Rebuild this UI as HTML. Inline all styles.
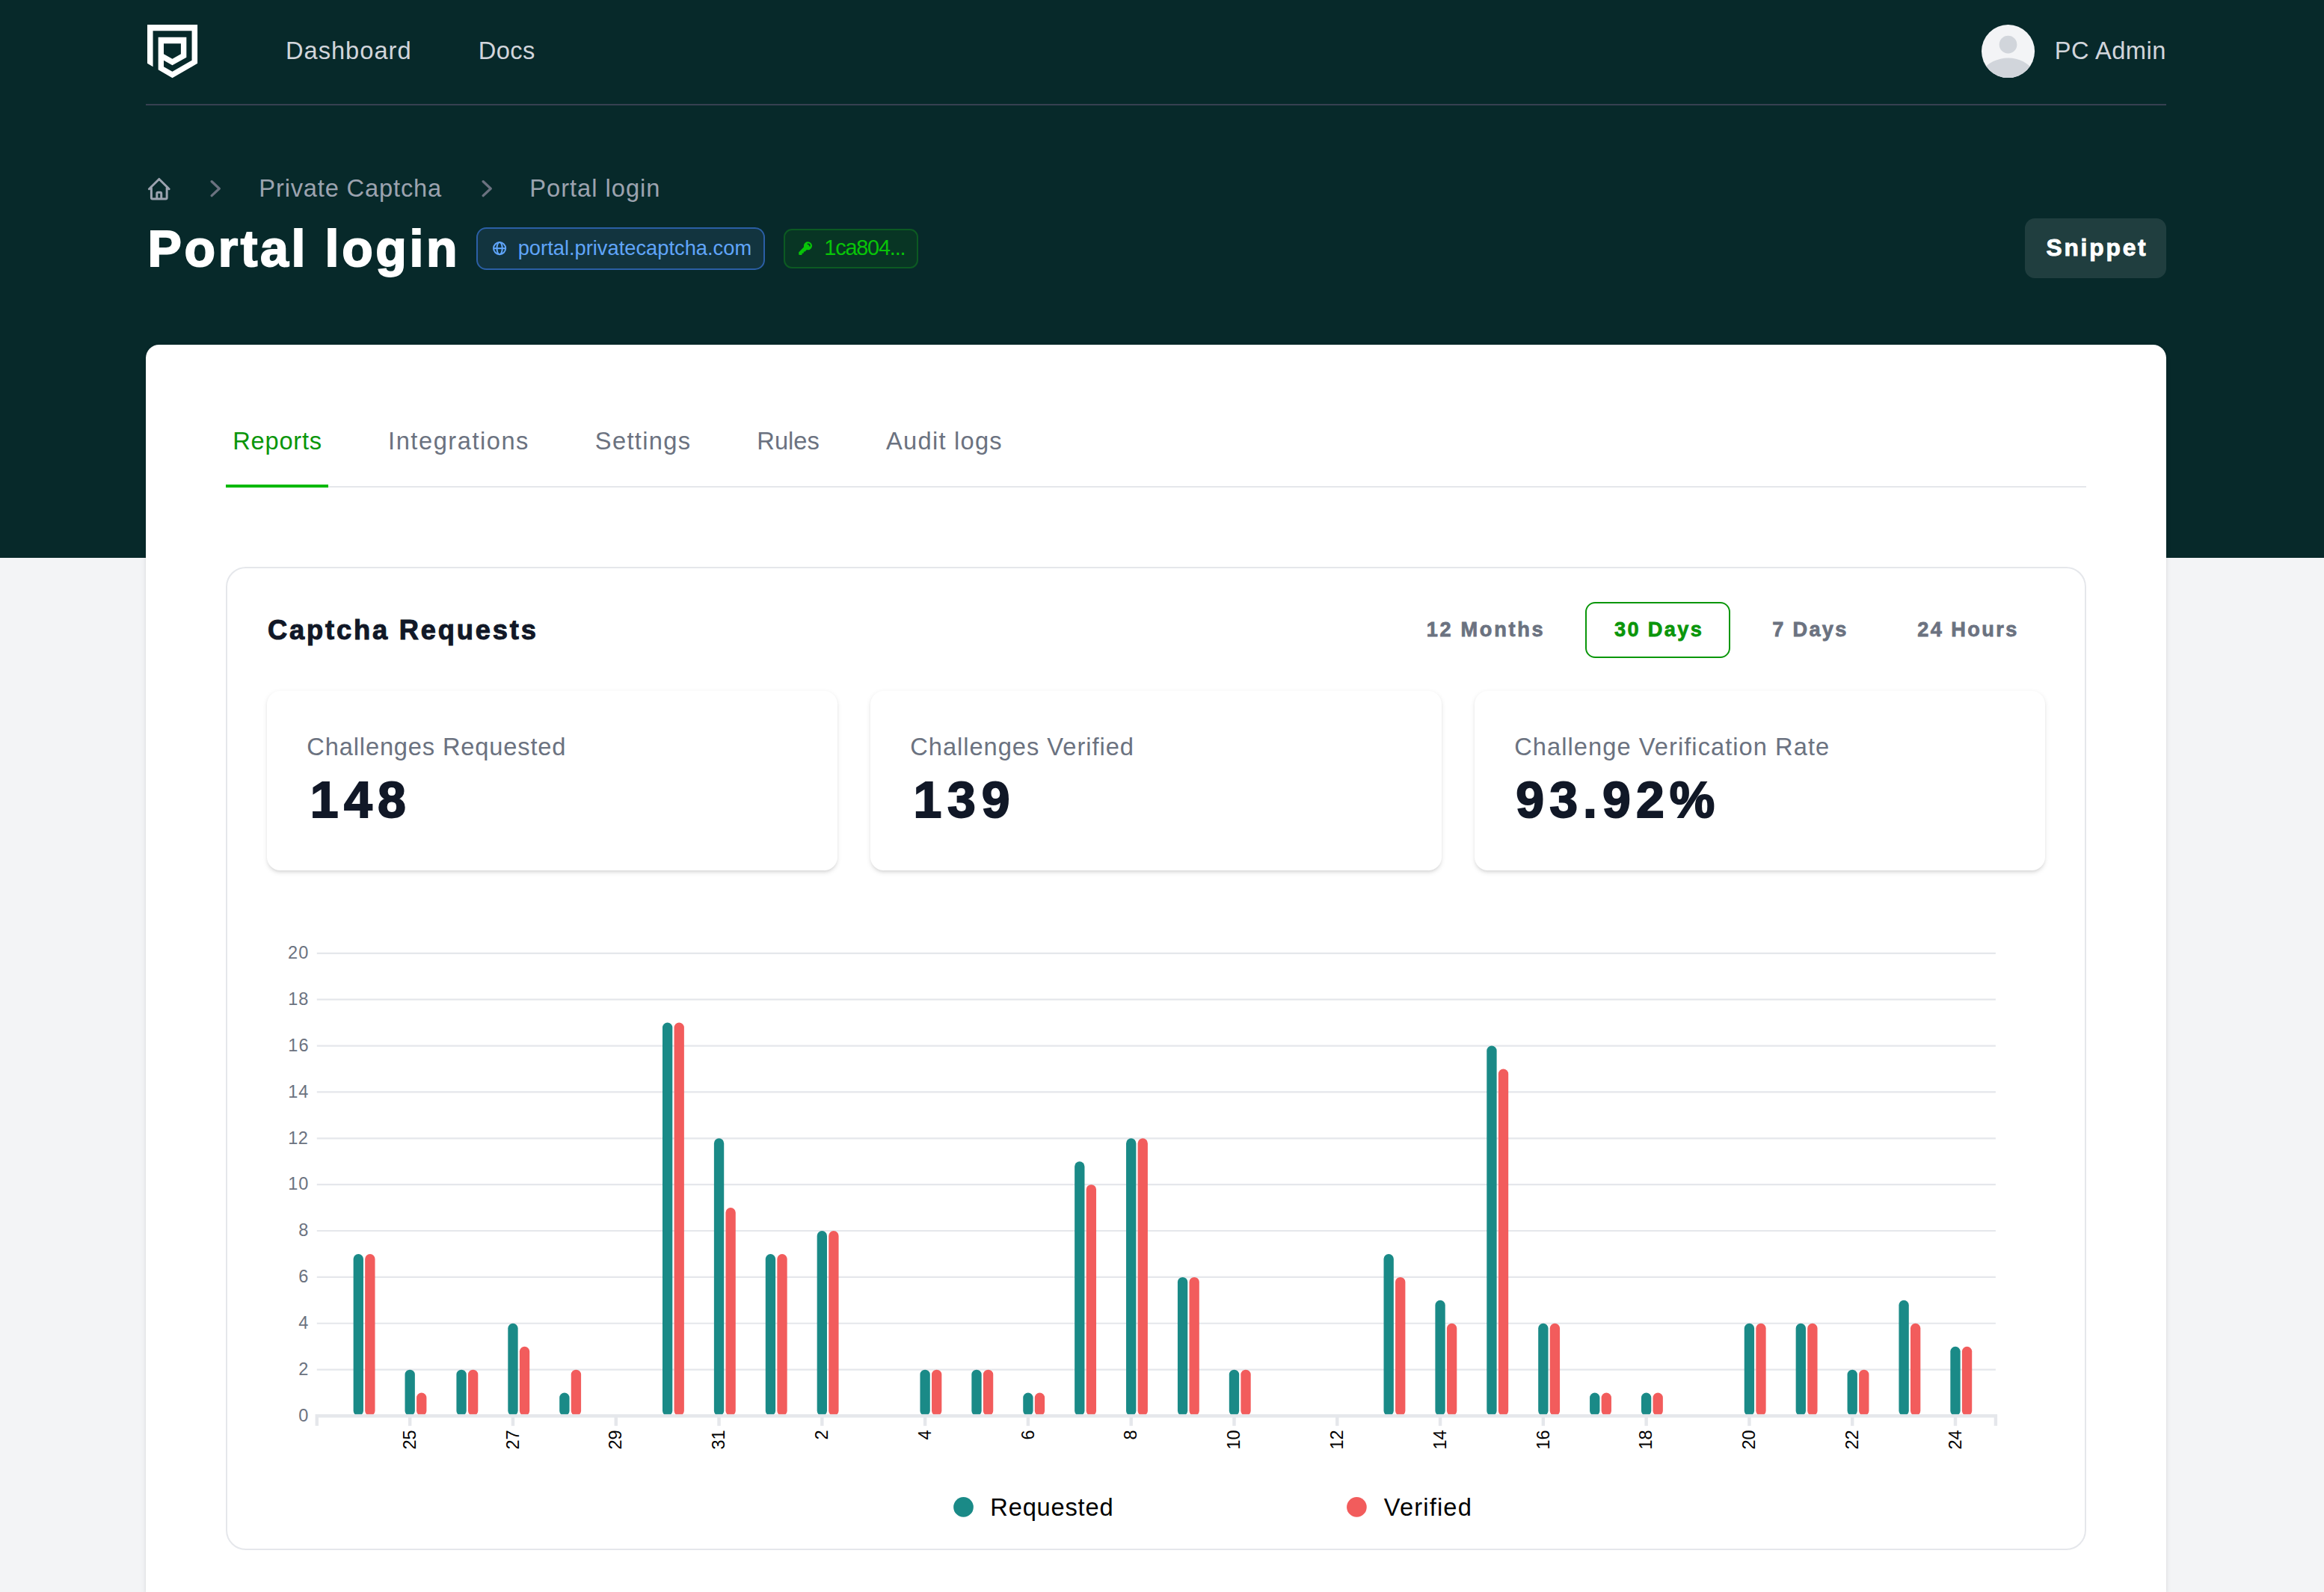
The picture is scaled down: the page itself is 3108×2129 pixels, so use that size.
<!DOCTYPE html>
<html lang="en"><head><meta charset="utf-8"><title>Portal login - Private Captcha</title>
<style>
html,body{margin:0;padding:0}
html{overflow:hidden;background:#f3f4f6}
body{width:3108px;height:2129px;overflow:hidden;background:#f3f4f6;position:relative;font-family:"Liberation Sans",sans-serif;-webkit-font-smoothing:antialiased}
.abs{position:absolute}
.t{position:absolute;white-space:nowrap;margin:0;padding:0}
svg{position:absolute;overflow:visible}
</style></head><body>

<div class="abs" style="left:0;top:0;width:3108px;height:745.7px;background:#07292a"></div>
<div class="abs" style="left:195px;top:138.6px;width:2702px;height:2.2px;background:#374151"></div>
<svg style="left:196.96px;top:32.88px" width="67.1" height="71.3" viewBox="270 205 1068 1135"><path fill="#fff" fill-rule="evenodd" d="M270,205 L1338,205 L1338,1030 L803,1340 L503,1165 L503,470 L1103,470 L1103,900 L803,1070 L620,965 L620,1100 L803,1205 L1218,965 L1218,335 L390,335 L390,1100 L270,1030 Z M620,605 L985,605 L985,830 L803,935 L620,830 Z"/></svg>
<svg style="left:2649.9px;top:33.1px" width="71.1" height="71.1" viewBox="0 0 24 24"><defs><clipPath id="av"><circle cx="12" cy="12" r="12"/></clipPath></defs><circle cx="12" cy="12" r="12" fill="#f3f4f6"/><g clip-path="url(#av)" fill="#d1d5db"><path d="M24 20.993V24H0v-2.996A14.977 14.977 0 0112.004 15c4.904 0 9.26 2.354 11.996 5.993z"/><circle cx="12" cy="9" r="4"/></g></svg>
<svg style="left:195px;top:234.5px" width="35.56" height="35.56" viewBox="0 0 24 24" fill="none" stroke="#9ca3af" stroke-width="2" stroke-linecap="round" stroke-linejoin="round"><path d="M3 12l2-2m0 0l7-7 7 7M5 10v10a1 1 0 001 1h3m10-11l2 2m-2-2v10a1 1 0 01-1 1h-3m-6 0a1 1 0 001-1v-4a1 1 0 011-1h2a1 1 0 011 1v4a1 1 0 001 1m-6 0h6"/></svg>
<svg style="left:266.1px;top:229.9px" width="44.44" height="44.44" viewBox="0 0 20 20"><path fill="#6b7280" fill-rule="evenodd" d="M7.21 14.77a.75.75 0 01.02-1.06L11.168 10 7.23 6.29a.75.75 0 111.04-1.08l4.5 4.25a.75.75 0 010 1.08l-4.5 4.25a.75.75 0 01-1.06-.02z" clip-rule="evenodd"/></svg>
<svg style="left:628.6px;top:229.9px" width="44.44" height="44.44" viewBox="0 0 20 20"><path fill="#6b7280" fill-rule="evenodd" d="M7.21 14.77a.75.75 0 01.02-1.06L11.168 10 7.23 6.29a.75.75 0 111.04-1.08l4.5 4.25a.75.75 0 010 1.08l-4.5 4.25a.75.75 0 01-1.06-.02z" clip-rule="evenodd"/></svg>
<div class="abs" style="left:637.1px;top:304.1px;width:385.8px;height:56.5px;box-sizing:border-box;border:2.2px solid #2b5fa5;background:#12343f;border-radius:13.3px"></div>
<svg style="left:656.9px;top:321px" width="22.22" height="22.22" viewBox="0 0 24 24" fill="none" stroke="#60a5fa" stroke-width="2.2"><circle cx="12" cy="12" r="8.7"/><ellipse cx="12" cy="12" rx="3.9" ry="8.7"/><path d="M3.3 12h17.4"/></svg>
<div class="abs" style="left:1048.1px;top:306.2px;width:180px;height:52.7px;box-sizing:border-box;border:2.2px solid #0c5a22;background:#083524;border-radius:11px"></div>
<svg style="left:1065.7px;top:320.9px" width="22.22" height="22.22" viewBox="0 0 20 20"><path fill="#08c408" fill-rule="evenodd" d="M8 7a5 5 0 1 1 3.61 4.804l-1.903 1.903A1 1 0 0 1 9 14H8v1a1 1 0 0 1-1 1H6v1a1 1 0 0 1-1 1H3a1 1 0 0 1-1-1v-2a1 1 0 0 1 .293-.707L8.196 8.39A5.002 5.002 0 0 1 8 7Zm5-3a.75.75 0 0 0 0 1.5A1.5 1.5 0 0 1 14.5 7 .75.75 0 0 0 16 7a3 3 0 0 0-3-3Z" clip-rule="evenodd"/></svg>
<div class="t" style="left:692.70px;top:317.99px;font-size:27.30px;line-height:27.30px;letter-spacing:-0.005px;color:#60a5fa">portal.privatecaptcha.com</div>
<div class="t" style="left:1102.30px;top:316.65px;font-size:28.89px;line-height:28.89px;letter-spacing:-1.197px;color:#08c408">1ca804...</div>
<div class="abs" style="left:2708px;top:291.8px;width:189px;height:80.2px;background:rgba(255,255,255,0.1);border-radius:13.3px"></div>
<div class="abs" style="left:194.8px;top:460.5px;width:2702.2px;height:1668.5px;background:#fff;border-radius:17.8px 17.8px 0 0;box-shadow:0 2.2px 6.7px rgba(0,0,0,0.1),0 2.2px 4.4px -2.2px rgba(0,0,0,0.1)"></div>
<div class="abs" style="left:302px;top:649.8px;width:2488px;height:2.2px;background:#e5e7eb"></div>
<div class="abs" style="left:302px;top:647.6px;width:137.1px;height:4.4px;background:#05b905"></div>
<div class="abs" style="left:301.7px;top:757.6px;width:2488.2px;height:1315.6px;box-sizing:border-box;border:2.2px solid #e5e7eb;border-radius:26.7px;background:#fff"></div>
<div class="abs" style="left:2119.9px;top:804.8px;width:194.1px;height:75.4px;box-sizing:border-box;border:2.2px solid #0a960a;border-radius:13.3px"></div>
<div class="abs" style="left:357.0px;top:923.7px;width:763.2px;height:240.2px;background:#fff;border-radius:17.8px;box-shadow:0 2.2px 6.7px rgba(0,0,0,0.1),0 2.2px 4.4px -2.2px rgba(0,0,0,0.1)"></div>
<div class="abs" style="left:1163.9px;top:923.7px;width:764.1px;height:240.2px;background:#fff;border-radius:17.8px;box-shadow:0 2.2px 6.7px rgba(0,0,0,0.1),0 2.2px 4.4px -2.2px rgba(0,0,0,0.1)"></div>
<div class="abs" style="left:1971.9px;top:923.7px;width:763.4px;height:240.2px;background:#fff;border-radius:17.8px;box-shadow:0 2.2px 6.7px rgba(0,0,0,0.1),0 2.2px 4.4px -2.2px rgba(0,0,0,0.1)"></div>
<svg style="left:0;top:0" width="3108" height="2129" viewBox="0 0 3108 2129"><line x1="423.8" x2="2668.9" y1="1831.63" y2="1831.63" stroke="#e5e7eb" stroke-width="2.2"/><line x1="423.8" x2="2668.9" y1="1769.76" y2="1769.76" stroke="#e5e7eb" stroke-width="2.2"/><line x1="423.8" x2="2668.9" y1="1707.89" y2="1707.89" stroke="#e5e7eb" stroke-width="2.2"/><line x1="423.8" x2="2668.9" y1="1646.02" y2="1646.02" stroke="#e5e7eb" stroke-width="2.2"/><line x1="423.8" x2="2668.9" y1="1584.15" y2="1584.15" stroke="#e5e7eb" stroke-width="2.2"/><line x1="423.8" x2="2668.9" y1="1522.28" y2="1522.28" stroke="#e5e7eb" stroke-width="2.2"/><line x1="423.8" x2="2668.9" y1="1460.41" y2="1460.41" stroke="#e5e7eb" stroke-width="2.2"/><line x1="423.8" x2="2668.9" y1="1398.54" y2="1398.54" stroke="#e5e7eb" stroke-width="2.2"/><line x1="423.8" x2="2668.9" y1="1336.67" y2="1336.67" stroke="#e5e7eb" stroke-width="2.2"/><line x1="423.8" x2="2668.9" y1="1274.80" y2="1274.80" stroke="#e5e7eb" stroke-width="2.2"/><rect x="472.63" y="1676.95" width="13.33" height="216.55" rx="6.67" fill="#1a8a87"/><rect x="488.19" y="1676.95" width="13.33" height="216.55" rx="6.67" fill="#f25c5c"/><rect x="541.53" y="1831.63" width="13.33" height="61.87" rx="6.67" fill="#1a8a87"/><rect x="557.08" y="1862.57" width="13.33" height="30.94" rx="6.67" fill="#f25c5c"/><rect x="610.42" y="1831.63" width="13.33" height="61.87" rx="6.67" fill="#1a8a87"/><rect x="625.98" y="1831.63" width="13.33" height="61.87" rx="6.67" fill="#f25c5c"/><rect x="679.31" y="1769.76" width="13.33" height="123.74" rx="6.67" fill="#1a8a87"/><rect x="694.87" y="1800.69" width="13.33" height="92.81" rx="6.67" fill="#f25c5c"/><rect x="748.21" y="1862.57" width="13.33" height="30.94" rx="6.67" fill="#1a8a87"/><rect x="763.76" y="1831.63" width="13.33" height="61.87" rx="6.67" fill="#f25c5c"/><rect x="885.99" y="1367.61" width="13.33" height="525.89" rx="6.67" fill="#1a8a87"/><rect x="901.55" y="1367.61" width="13.33" height="525.89" rx="6.67" fill="#f25c5c"/><rect x="954.89" y="1522.28" width="13.33" height="371.22" rx="6.67" fill="#1a8a87"/><rect x="970.44" y="1615.09" width="13.33" height="278.42" rx="6.67" fill="#f25c5c"/><rect x="1023.78" y="1676.95" width="13.33" height="216.55" rx="6.67" fill="#1a8a87"/><rect x="1039.34" y="1676.95" width="13.33" height="216.55" rx="6.67" fill="#f25c5c"/><rect x="1092.68" y="1646.02" width="13.33" height="247.48" rx="6.67" fill="#1a8a87"/><rect x="1108.23" y="1646.02" width="13.33" height="247.48" rx="6.67" fill="#f25c5c"/><rect x="1230.46" y="1831.63" width="13.33" height="61.87" rx="6.67" fill="#1a8a87"/><rect x="1246.02" y="1831.63" width="13.33" height="61.87" rx="6.67" fill="#f25c5c"/><rect x="1299.36" y="1831.63" width="13.33" height="61.87" rx="6.67" fill="#1a8a87"/><rect x="1314.91" y="1831.63" width="13.33" height="61.87" rx="6.67" fill="#f25c5c"/><rect x="1368.25" y="1862.57" width="13.33" height="30.94" rx="6.67" fill="#1a8a87"/><rect x="1383.81" y="1862.57" width="13.33" height="30.94" rx="6.67" fill="#f25c5c"/><rect x="1437.14" y="1553.21" width="13.33" height="340.29" rx="6.67" fill="#1a8a87"/><rect x="1452.70" y="1584.15" width="13.33" height="309.35" rx="6.67" fill="#f25c5c"/><rect x="1506.04" y="1522.28" width="13.33" height="371.22" rx="6.67" fill="#1a8a87"/><rect x="1521.59" y="1522.28" width="13.33" height="371.22" rx="6.67" fill="#f25c5c"/><rect x="1574.93" y="1707.89" width="13.33" height="185.61" rx="6.67" fill="#1a8a87"/><rect x="1590.49" y="1707.89" width="13.33" height="185.61" rx="6.67" fill="#f25c5c"/><rect x="1643.82" y="1831.63" width="13.33" height="61.87" rx="6.67" fill="#1a8a87"/><rect x="1659.38" y="1831.63" width="13.33" height="61.87" rx="6.67" fill="#f25c5c"/><rect x="1850.50" y="1676.95" width="13.33" height="216.55" rx="6.67" fill="#1a8a87"/><rect x="1866.06" y="1707.89" width="13.33" height="185.61" rx="6.67" fill="#f25c5c"/><rect x="1919.40" y="1738.83" width="13.33" height="154.68" rx="6.67" fill="#1a8a87"/><rect x="1934.95" y="1769.76" width="13.33" height="123.74" rx="6.67" fill="#f25c5c"/><rect x="1988.29" y="1398.54" width="13.33" height="494.96" rx="6.67" fill="#1a8a87"/><rect x="2003.85" y="1429.47" width="13.33" height="464.03" rx="6.67" fill="#f25c5c"/><rect x="2057.18" y="1769.76" width="13.33" height="123.74" rx="6.67" fill="#1a8a87"/><rect x="2072.74" y="1769.76" width="13.33" height="123.74" rx="6.67" fill="#f25c5c"/><rect x="2126.08" y="1862.57" width="13.33" height="30.94" rx="6.67" fill="#1a8a87"/><rect x="2141.63" y="1862.57" width="13.33" height="30.94" rx="6.67" fill="#f25c5c"/><rect x="2194.97" y="1862.57" width="13.33" height="30.94" rx="6.67" fill="#1a8a87"/><rect x="2210.53" y="1862.57" width="13.33" height="30.94" rx="6.67" fill="#f25c5c"/><rect x="2332.76" y="1769.76" width="13.33" height="123.74" rx="6.67" fill="#1a8a87"/><rect x="2348.31" y="1769.76" width="13.33" height="123.74" rx="6.67" fill="#f25c5c"/><rect x="2401.65" y="1769.76" width="13.33" height="123.74" rx="6.67" fill="#1a8a87"/><rect x="2417.21" y="1769.76" width="13.33" height="123.74" rx="6.67" fill="#f25c5c"/><rect x="2470.55" y="1831.63" width="13.33" height="61.87" rx="6.67" fill="#1a8a87"/><rect x="2486.10" y="1831.63" width="13.33" height="61.87" rx="6.67" fill="#f25c5c"/><rect x="2539.44" y="1738.83" width="13.33" height="154.68" rx="6.67" fill="#1a8a87"/><rect x="2555.00" y="1769.76" width="13.33" height="123.74" rx="6.67" fill="#f25c5c"/><rect x="2608.33" y="1800.69" width="13.33" height="92.81" rx="6.67" fill="#1a8a87"/><rect x="2623.89" y="1800.69" width="13.33" height="92.81" rx="6.67" fill="#f25c5c"/><path d="M423.8,1906.80V1893.5H2668.9V1906.80" fill="none" stroke="#e5e7eb" stroke-width="4.44"/><line x1="548.19" x2="548.19" y1="1893.5" y2="1906.80" stroke="#e5e7eb" stroke-width="4.44"/><line x1="685.98" x2="685.98" y1="1893.5" y2="1906.80" stroke="#e5e7eb" stroke-width="4.44"/><line x1="823.77" x2="823.77" y1="1893.5" y2="1906.80" stroke="#e5e7eb" stroke-width="4.44"/><line x1="961.55" x2="961.55" y1="1893.5" y2="1906.80" stroke="#e5e7eb" stroke-width="4.44"/><line x1="1099.34" x2="1099.34" y1="1893.5" y2="1906.80" stroke="#e5e7eb" stroke-width="4.44"/><line x1="1237.13" x2="1237.13" y1="1893.5" y2="1906.80" stroke="#e5e7eb" stroke-width="4.44"/><line x1="1374.92" x2="1374.92" y1="1893.5" y2="1906.80" stroke="#e5e7eb" stroke-width="4.44"/><line x1="1512.70" x2="1512.70" y1="1893.5" y2="1906.80" stroke="#e5e7eb" stroke-width="4.44"/><line x1="1650.49" x2="1650.49" y1="1893.5" y2="1906.80" stroke="#e5e7eb" stroke-width="4.44"/><line x1="1788.28" x2="1788.28" y1="1893.5" y2="1906.80" stroke="#e5e7eb" stroke-width="4.44"/><line x1="1926.06" x2="1926.06" y1="1893.5" y2="1906.80" stroke="#e5e7eb" stroke-width="4.44"/><line x1="2063.85" x2="2063.85" y1="1893.5" y2="1906.80" stroke="#e5e7eb" stroke-width="4.44"/><line x1="2201.64" x2="2201.64" y1="1893.5" y2="1906.80" stroke="#e5e7eb" stroke-width="4.44"/><line x1="2339.43" x2="2339.43" y1="1893.5" y2="1906.80" stroke="#e5e7eb" stroke-width="4.44"/><line x1="2477.21" x2="2477.21" y1="1893.5" y2="1906.80" stroke="#e5e7eb" stroke-width="4.44"/><line x1="2615.00" x2="2615.00" y1="1893.5" y2="1906.80" stroke="#e5e7eb" stroke-width="4.44"/><text transform="translate(555.89,1912.40) rotate(-90)" text-anchor="end" font-family='"Liberation Sans", sans-serif' font-size="23.56" fill="#000">25</text><text transform="translate(693.68,1912.40) rotate(-90)" text-anchor="end" font-family='"Liberation Sans", sans-serif' font-size="23.56" fill="#000">27</text><text transform="translate(831.47,1912.40) rotate(-90)" text-anchor="end" font-family='"Liberation Sans", sans-serif' font-size="23.56" fill="#000">29</text><text transform="translate(969.25,1912.40) rotate(-90)" text-anchor="end" font-family='"Liberation Sans", sans-serif' font-size="23.56" fill="#000">31</text><text transform="translate(1107.04,1912.40) rotate(-90)" text-anchor="end" font-family='"Liberation Sans", sans-serif' font-size="23.56" fill="#000">2</text><text transform="translate(1244.83,1912.40) rotate(-90)" text-anchor="end" font-family='"Liberation Sans", sans-serif' font-size="23.56" fill="#000">4</text><text transform="translate(1382.62,1912.40) rotate(-90)" text-anchor="end" font-family='"Liberation Sans", sans-serif' font-size="23.56" fill="#000">6</text><text transform="translate(1520.40,1912.40) rotate(-90)" text-anchor="end" font-family='"Liberation Sans", sans-serif' font-size="23.56" fill="#000">8</text><text transform="translate(1658.19,1912.40) rotate(-90)" text-anchor="end" font-family='"Liberation Sans", sans-serif' font-size="23.56" fill="#000">10</text><text transform="translate(1795.98,1912.40) rotate(-90)" text-anchor="end" font-family='"Liberation Sans", sans-serif' font-size="23.56" fill="#000">12</text><text transform="translate(1933.76,1912.40) rotate(-90)" text-anchor="end" font-family='"Liberation Sans", sans-serif' font-size="23.56" fill="#000">14</text><text transform="translate(2071.55,1912.40) rotate(-90)" text-anchor="end" font-family='"Liberation Sans", sans-serif' font-size="23.56" fill="#000">16</text><text transform="translate(2209.34,1912.40) rotate(-90)" text-anchor="end" font-family='"Liberation Sans", sans-serif' font-size="23.56" fill="#000">18</text><text transform="translate(2347.13,1912.40) rotate(-90)" text-anchor="end" font-family='"Liberation Sans", sans-serif' font-size="23.56" fill="#000">20</text><text transform="translate(2484.91,1912.40) rotate(-90)" text-anchor="end" font-family='"Liberation Sans", sans-serif' font-size="23.56" fill="#000">22</text><text transform="translate(2622.70,1912.40) rotate(-90)" text-anchor="end" font-family='"Liberation Sans", sans-serif' font-size="23.56" fill="#000">24</text><circle cx="1288.5" cy="2015.4" r="13.33" fill="#1a8a87"/><circle cx="1814.4" cy="2015.4" r="13.33" fill="#f25c5c"/></svg>
<div class="t" style="left:381.91px;top:51.65px;font-size:32.67px;line-height:32.67px;letter-spacing:0.993px;color:#d1d5db;font-family:'Liberation Sans',sans-serif">Dashboard</div>
<div class="t" style="left:639.81px;top:51.65px;font-size:32.67px;line-height:32.67px;letter-spacing:0.409px;color:#d1d5db;font-family:'Liberation Sans',sans-serif">Docs</div>
<div class="t" style="left:2747.79px;top:52.15px;font-size:32.67px;line-height:32.67px;letter-spacing:0.493px;color:#d1d5db;font-family:'Liberation Sans',sans-serif">PC Admin</div>
<div class="t" style="left:346.34px;top:235.75px;font-size:32.67px;line-height:32.67px;letter-spacing:0.822px;color:#9ca3af;font-family:'Liberation Sans',sans-serif">Private Captcha</div>
<div class="t" style="left:708.24px;top:235.75px;font-size:32.67px;line-height:32.67px;letter-spacing:0.991px;color:#9ca3af;font-family:'Liberation Sans',sans-serif">Portal login</div>
<div class="t" style="left:197.48px;top:297.53px;font-size:68.00px;line-height:68.00px;letter-spacing:3.649px;color:#ffffff;font-weight:700;-webkit-text-stroke:1.90px #ffffff;font-family:'Liberation Sans',sans-serif">Portal login</div>
<div class="t" style="left:2736.45px;top:315.54px;font-size:31.73px;line-height:31.73px;letter-spacing:2.823px;color:#ffffff;font-weight:700;-webkit-text-stroke:0.89px #ffffff;font-family:'Liberation Sans',sans-serif">Snippet</div>
<div class="t" style="left:311.30px;top:574.05px;font-size:32.67px;line-height:32.67px;letter-spacing:0.739px;color:#0a960a;font-family:'Liberation Sans',sans-serif">Reports</div>
<div class="t" style="left:519.11px;top:574.05px;font-size:32.67px;line-height:32.67px;letter-spacing:1.515px;color:#6b7280;font-family:'Liberation Sans',sans-serif">Integrations</div>
<div class="t" style="left:795.87px;top:574.05px;font-size:32.67px;line-height:32.67px;letter-spacing:1.304px;color:#6b7280;font-family:'Liberation Sans',sans-serif">Settings</div>
<div class="t" style="left:1012.34px;top:574.05px;font-size:32.67px;line-height:32.67px;letter-spacing:-0.027px;color:#6b7280;font-family:'Liberation Sans',sans-serif">Rules</div>
<div class="t" style="left:1185.02px;top:574.05px;font-size:32.67px;line-height:32.67px;letter-spacing:1.252px;color:#6b7280;font-family:'Liberation Sans',sans-serif">Audit logs</div>
<div class="t" style="left:357.94px;top:824.80px;font-size:36.27px;line-height:36.27px;letter-spacing:2.840px;color:#111827;font-weight:700;-webkit-text-stroke:1.02px #111827;font-family:'Liberation Sans',sans-serif">Captcha Requests</div>
<div class="t" style="left:1907.66px;top:828.08px;font-size:27.20px;line-height:27.20px;letter-spacing:2.688px;color:#6b7280;font-weight:700;-webkit-text-stroke:0.76px #6b7280;font-family:'Liberation Sans',sans-serif">12 Months</div>
<div class="t" style="left:2158.90px;top:827.68px;font-size:27.20px;line-height:27.20px;letter-spacing:2.373px;color:#0a960a;font-weight:700;-webkit-text-stroke:0.76px #0a960a;font-family:'Liberation Sans',sans-serif">30 Days</div>
<div class="t" style="left:2370.34px;top:827.68px;font-size:27.20px;line-height:27.20px;letter-spacing:2.250px;color:#6b7280;font-weight:700;-webkit-text-stroke:0.76px #6b7280;font-family:'Liberation Sans',sans-serif">7 Days</div>
<div class="t" style="left:2564.35px;top:827.68px;font-size:27.20px;line-height:27.20px;letter-spacing:2.370px;color:#6b7280;font-weight:700;-webkit-text-stroke:0.76px #6b7280;font-family:'Liberation Sans',sans-serif">24 Hours</div>
<div class="t" style="left:410.36px;top:983.15px;font-size:32.67px;line-height:32.67px;letter-spacing:0.824px;color:#6b7280;font-family:'Liberation Sans',sans-serif">Challenges Requested</div>
<div class="t" style="left:414.75px;top:1035.24px;font-size:68.00px;line-height:68.00px;letter-spacing:7.312px;color:#111827;font-weight:700;-webkit-text-stroke:1.90px #111827;font-family:'Liberation Sans',sans-serif">148</div>
<div class="t" style="left:1217.26px;top:983.15px;font-size:32.67px;line-height:32.67px;letter-spacing:0.965px;color:#6b7280;font-family:'Liberation Sans',sans-serif">Challenges Verified</div>
<div class="t" style="left:1221.44px;top:1035.24px;font-size:68.00px;line-height:68.00px;letter-spacing:7.814px;color:#111827;font-weight:700;-webkit-text-stroke:1.90px #111827;font-family:'Liberation Sans',sans-serif">139</div>
<div class="t" style="left:2025.26px;top:983.15px;font-size:32.67px;line-height:32.67px;letter-spacing:1.040px;color:#6b7280;font-family:'Liberation Sans',sans-serif">Challenge Verification Rate</div>
<div class="t" style="left:2027.26px;top:1035.24px;font-size:68.00px;line-height:68.00px;letter-spacing:7.085px;color:#111827;font-weight:700;-webkit-text-stroke:1.90px #111827;font-family:'Liberation Sans',sans-serif">93.92%</div>
<div class="t" style="left:1324.35px;top:2000.25px;font-size:32.67px;line-height:32.67px;letter-spacing:0.781px;color:#000000;font-family:'Liberation Sans',sans-serif">Requested</div>
<div class="t" style="left:1850.75px;top:2000.25px;font-size:32.67px;line-height:32.67px;letter-spacing:1.161px;color:#000000;font-family:'Liberation Sans',sans-serif">Verified</div>
<div class="t" style="left:399.21px;top:1882.27px;font-size:23.56px;line-height:23.56px;letter-spacing:0.000px;color:#6b7280;font-family:'Liberation Sans',sans-serif">0</div>
<div class="t" style="left:399.21px;top:1819.60px;font-size:23.56px;line-height:23.56px;letter-spacing:0.000px;color:#6b7280;font-family:'Liberation Sans',sans-serif">2</div>
<div class="t" style="left:399.26px;top:1757.73px;font-size:23.56px;line-height:23.56px;letter-spacing:0.000px;color:#6b7280;font-family:'Liberation Sans',sans-serif">4</div>
<div class="t" style="left:399.22px;top:1695.86px;font-size:23.56px;line-height:23.56px;letter-spacing:0.000px;color:#6b7280;font-family:'Liberation Sans',sans-serif">6</div>
<div class="t" style="left:399.25px;top:1633.99px;font-size:23.56px;line-height:23.56px;letter-spacing:0.000px;color:#6b7280;font-family:'Liberation Sans',sans-serif">8</div>
<div class="t" style="left:385.34px;top:1572.12px;font-size:23.56px;line-height:23.56px;letter-spacing:0.853px;color:#6b7280;font-family:'Liberation Sans',sans-serif">10</div>
<div class="t" style="left:385.34px;top:1511.05px;font-size:23.56px;line-height:23.56px;letter-spacing:0.227px;color:#6b7280;font-family:'Liberation Sans',sans-serif">12</div>
<div class="t" style="left:385.34px;top:1449.18px;font-size:23.56px;line-height:23.56px;letter-spacing:0.934px;color:#6b7280;font-family:'Liberation Sans',sans-serif">14</div>
<div class="t" style="left:385.34px;top:1386.51px;font-size:23.56px;line-height:23.56px;letter-spacing:0.954px;color:#6b7280;font-family:'Liberation Sans',sans-serif">16</div>
<div class="t" style="left:385.34px;top:1324.64px;font-size:23.56px;line-height:23.56px;letter-spacing:0.878px;color:#6b7280;font-family:'Liberation Sans',sans-serif">18</div>
<div class="t" style="left:385.04px;top:1262.77px;font-size:23.56px;line-height:23.56px;letter-spacing:1.150px;color:#6b7280;font-family:'Liberation Sans',sans-serif">20</div>
</body></html>
